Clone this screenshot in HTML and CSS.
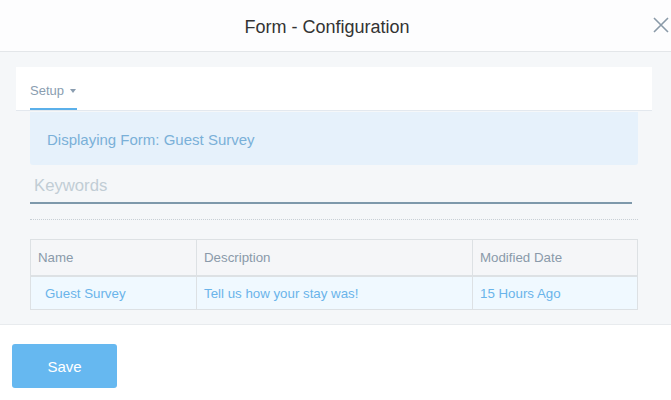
FILE: index.html
```html
<!DOCTYPE html>
<html>
<head>
<meta charset="utf-8">
<link rel="stylesheet" href="styles.css">
</head>
<body>
<div class="modal">
  <header class="head">
    <h1 class="title">Form - Configuration</h1>
    <button class="close" aria-label="Close">
      <svg width="16" height="16" viewBox="0 0 16 16"><path d="M1 1L15 15M15 1L1 15" stroke="#8a9aa8" stroke-width="1.6" fill="none"/></svg>
    </button>
  </header>
  <main class="body">
    <nav class="tabs">
      <div class="tab active">Setup<span class="caret"></span></div>
    </nav>
    <div class="content">
      <div class="alert">Displaying Form: Guest Survey</div>
      <div class="search"><span class="placeholder">Keywords</span></div>
      <div class="dots"></div>
      <table class="grid">
        <thead>
          <tr><th class="c1">Name</th><th class="c2">Description</th><th class="c3">Modified Date</th></tr>
        </thead>
        <tbody>
          <tr><td class="c1 name">Guest Survey</td><td class="c2">Tell us how your stay was!</td><td class="c3">15 Hours Ago</td></tr>
        </tbody>
      </table>
    </div>
  </main>
  <footer class="foot">
    <button class="save">Save</button>
  </footer>
</div>
</body>
</html>
```
FILE: styles.css
```css
* { box-sizing: border-box; }
html, body { margin: 0; padding: 0; }
body { font-family: "Liberation Sans", Arial, sans-serif; background: #fff; width: 671px; height: 400px; overflow: hidden; }
.modal { display: flex; flex-direction: column; height: 400px; }
.head { flex-shrink: 0; height: 52px; border-bottom: 1px solid #e3e6e9; display: flex; align-items: center; justify-content: center; padding: 3px 17px 0 0; position: relative; background: #fdfdfe; }
.title { margin: 0; font-size: 18px; font-weight: normal; color: #333; }
.close { position: absolute; right: 2px; top: 17px; border: 0; background: none; padding: 0; width: 16px; height: 16px; }
.close svg { display: block; }
.body { flex-shrink: 0; background: #f5f7f9; padding: 15px 19px 0 16px; height: 273px; border-bottom: 1px solid #e8ebee; }
.tabs { background: #fff; height: 44px; border-bottom: 1px solid #e3e8ee; padding-left: 14px; display: flex; }
.tab { font-size: 13px; color: #8a9db0; padding-top: 16px; border-bottom: 2px solid #5bb0ea; height: 43px; white-space: nowrap; padding-right: 1px; }
.caret { display: inline-block; width: 0; height: 0; border-left: 3.5px solid transparent; border-right: 3.5px solid transparent; border-top: 4px solid #8a9db0; vertical-align: middle; margin-left: 6px; position: relative; top: -1px; }
.content { padding: 1px 14px 0 14px; }
.alert { background: #e6f1fb; color: #7ab0d8; font-size: 15px; height: 53px; padding: 19px 17px 0 17px; border-radius: 0 0 3px 3px; }
.search { margin-top: 10px; width: 602px; height: 29px; border-bottom: 2px solid #7e99ab; padding: 1px 4px 0; }
.placeholder { font-size: 16.7px; color: #c1cdd5; }
.dots { margin-top: 15px; height: 1px; border-top: 1px dotted #c8cfd5; }
.grid { margin-top: 19px; width: 608px; border-collapse: collapse; font-size: 13.3px; }
.grid th, .grid td { border: 1px solid #dde1e4; text-align: left; font-weight: normal; padding: 1px 7px 0; }
.grid th { background: #f5f6f8; color: #8a9aaa; height: 36px; border-bottom-width: 2px; }
.grid td { background: #f0f9ff; color: #6ab4ea; height: 34px; }
.grid td.name { padding-left: 14px; }
.c1 { width: 166px; }
.c2 { width: 276px; }
.foot { flex-shrink: 0; padding: 19px 12px 0; }
.save { width: 105px; height: 44px; background: #66b8f0; border: 0; border-radius: 3px; color: #fff; font-family: "Liberation Sans", Arial, sans-serif; font-size: 15px; padding: 1px 0 0; }
```
